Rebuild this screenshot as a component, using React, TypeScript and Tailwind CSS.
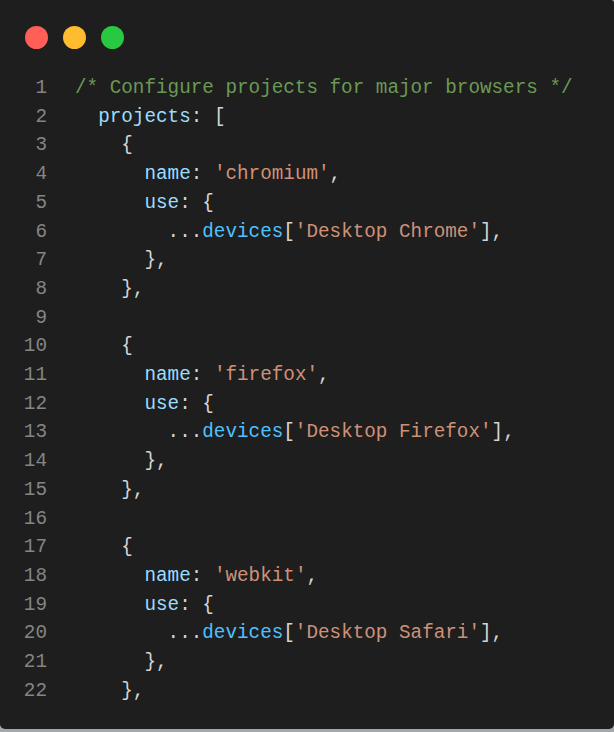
type Tok = { t: string; c?: string };

const P = "#d4d4d4";
const KEY = "#9cdcfe";
const STR = "#ce9178";
const FN = "#4fc1ff";
const CMT = "#6a9955";

const lines: Tok[][] = [
  [{ t: "/* Configure projects for major browsers */", c: CMT }],
  [{ t: "  " }, { t: "projects", c: KEY }, { t: ": [" }],
  [{ t: "    {" }],
  [{ t: "      " }, { t: "name", c: KEY }, { t: ": " }, { t: "'chromium'", c: STR }, { t: "," }],
  [{ t: "      " }, { t: "use", c: KEY }, { t: ": {" }],
  [{ t: "        ..." }, { t: "devices", c: FN }, { t: "[" }, { t: "'Desktop Chrome'", c: STR }, { t: "]," }],
  [{ t: "      }," }],
  [{ t: "    }," }],
  [],
  [{ t: "    {" }],
  [{ t: "      " }, { t: "name", c: KEY }, { t: ": " }, { t: "'firefox'", c: STR }, { t: "," }],
  [{ t: "      " }, { t: "use", c: KEY }, { t: ": {" }],
  [{ t: "        ..." }, { t: "devices", c: FN }, { t: "[" }, { t: "'Desktop Firefox'", c: STR }, { t: "]," }],
  [{ t: "      }," }],
  [{ t: "    }," }],
  [],
  [{ t: "    {" }],
  [{ t: "      " }, { t: "name", c: KEY }, { t: ": " }, { t: "'webkit'", c: STR }, { t: "," }],
  [{ t: "      " }, { t: "use", c: KEY }, { t: ": {" }],
  [{ t: "        ..." }, { t: "devices", c: FN }, { t: "[" }, { t: "'Desktop Safari'", c: STR }, { t: "]," }],
  [{ t: "      }," }],
  [{ t: "    }," }],
];

const App = () => {
  return (
    <div className="w-[614px] h-[732px] bg-[#a3a8ad]">
      <div className="h-[729px] bg-[#1e1e1e] rounded-b-[5px] rounded-tr-[3px] pt-[26px] pl-[25px]">
        <div className="flex gap-[15px]">
          <span className="w-[23px] h-[23px] rounded-full bg-[#ff5f57]" />
          <span className="w-[23px] h-[23px] rounded-full bg-[#febc2e]" />
          <span className="w-[23px] h-[23px] rounded-full bg-[#28c840]" />
        </div>

        <div
          className="mt-[25px] -ml-[25px] text-[19.3px] leading-[28.7px] whitespace-pre"
          style={{ fontFamily: '"Liberation Mono", "DejaVu Sans Mono", monospace' }}
        >
          {lines.map((toks, i) => (
            <div key={i} className="flex">
              <span className="w-[47px] text-right text-[#858585] shrink-0">
                {i + 1}
              </span>
              <span className="ml-[28px] text-[#d4d4d4]">
                {toks.map((tok, j) => (
                  <span key={j} style={{ color: tok.c ?? P }}>
                    {tok.t}
                  </span>
                ))}
              </span>
            </div>
          ))}
        </div>
      </div>
    </div>
  );
};

export default App;
